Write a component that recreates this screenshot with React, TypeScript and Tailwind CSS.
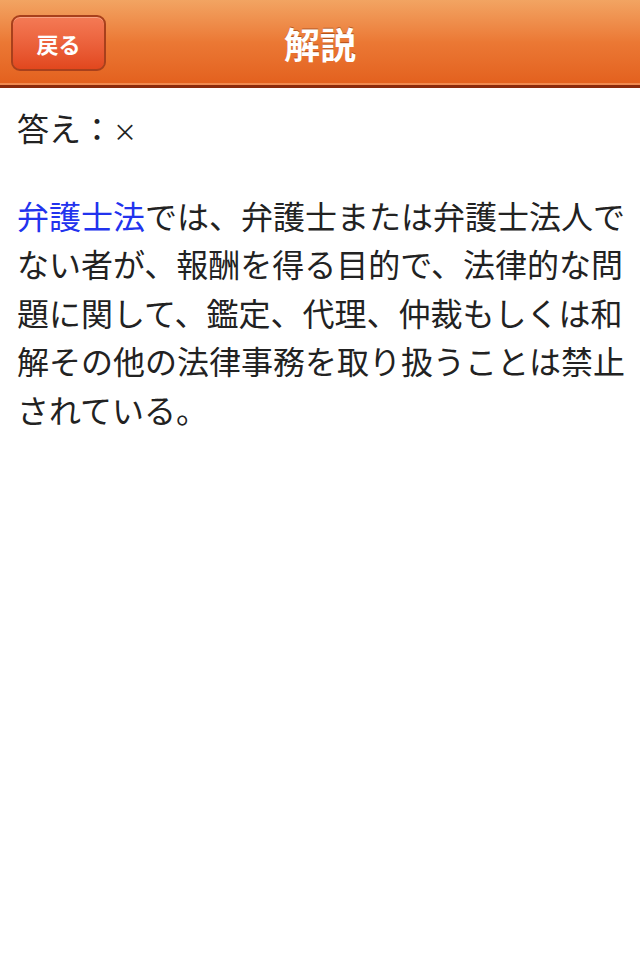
const jp = { fontFamily: '"Noto Sans CJK JP", "Noto Sans", sans-serif' };

const lines = [
  'ない者が、報酬を得る目的で、法律的な問',
  '題に関して、鑑定、代理、仲裁もしくは和',
  '解その他の法律事務を取り扱うことは禁止',
  'されている。',
];

export default function App() {
  return (
    <div className="min-h-[960px] w-[640px] bg-white" style={jp}>
      <header className="relative flex h-[88px] items-center justify-center border-b-[3px] border-[#8a2a0c] bg-gradient-to-b from-[#f2a462] via-[#eb7834] to-[#e3601d] shadow-[inset_0_-2px_0_#f08a50]">
        <button className="absolute left-[11px] top-[15px] flex h-[56px] w-[95px] items-center justify-center rounded-[9px] border-2 border-[#a8401c] bg-gradient-to-b from-[#f47a55] to-[#e2471d] text-[22px] font-bold text-white shadow-[inset_0_1px_0_#f9a283]">
          戻る
        </button>
        <h1 className="text-[36px] font-bold leading-none text-white [text-shadow:0_-1px_0_rgba(120,40,0,0.5)]">
          解説
        </h1>
      </header>

      <main className="px-[17px] pt-[15px] text-[32px] leading-[48.5px] text-[#222]">
        <p>
          答え：<span className="text-[24px]">×</span>
        </p>
        <div className="mt-[35px]">
          <div className="whitespace-nowrap">
            <span className="text-[#2233ee]">弁護士法</span>では、弁護士または弁護士法人で
          </div>
          {lines.map((l) => (
            <div key={l} className="whitespace-nowrap">
              {l}
            </div>
          ))}
        </div>
      </main>
    </div>
  );
}
